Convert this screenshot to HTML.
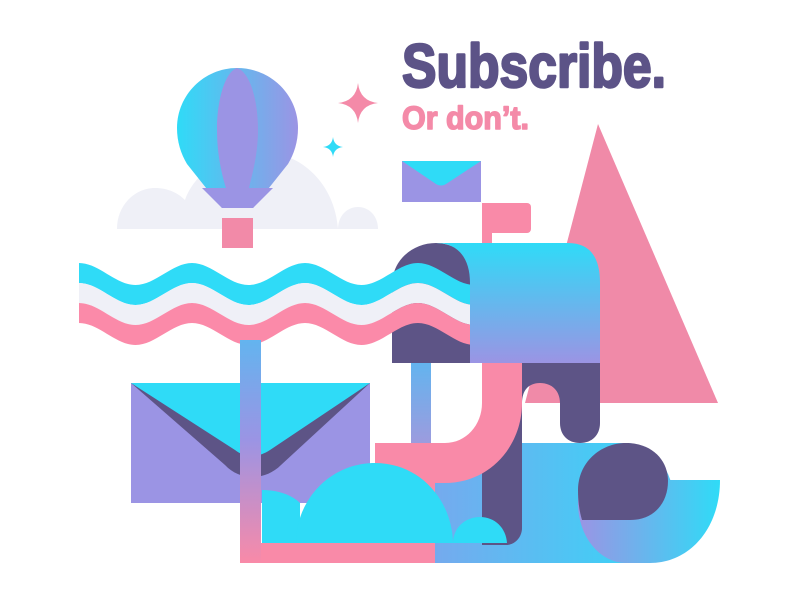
<!DOCTYPE html>
<html><head><meta charset="utf-8"><style>html,body{margin:0;padding:0;background:#fff;width:800px;height:600px;overflow:hidden}</style></head>
<body>
<svg width="800" height="600" viewBox="0 0 800 600" xmlns="http://www.w3.org/2000/svg">
<defs>
<linearGradient id="bal" x1="0" y1="0" x2="1" y2="0"><stop offset="0" stop-color="#2fdbf7"/><stop offset="1" stop-color="#9b94e4"/></linearGradient>
<linearGradient id="front" x1="0" y1="0" x2="0" y2="1"><stop offset="0" stop-color="#2fdbf7"/><stop offset="1" stop-color="#9b94e4"/></linearGradient>
<linearGradient id="pole" x1="0" y1="0" x2="0" y2="1"><stop offset="0" stop-color="#63b4ef"/><stop offset="0.45" stop-color="#9b94e4"/><stop offset="1" stop-color="#f98aa8"/></linearGradient>
<linearGradient id="pole2" x1="0" y1="0" x2="0" y2="1"><stop offset="0" stop-color="#63b4ef"/><stop offset="1" stop-color="#b98fd6"/></linearGradient>
<linearGradient id="bot" x1="0" y1="0" x2="1" y2="0"><stop offset="0" stop-color="#75aaee"/><stop offset="1" stop-color="#3fd0f6"/></linearGradient>
<linearGradient id="bot2" x1="578" y1="0" x2="720" y2="0" gradientUnits="userSpaceOnUse"><stop offset="0" stop-color="#9b94e4"/><stop offset="1" stop-color="#2fdbf7"/></linearGradient>
<path id="wave" d="M79,263 C99,263 115.5,285 135.5,285 C155.5,285 172,263 192,263 C212,263 228.5,285 248.5,285 C268.5,285 285,263 305,263 C325,263 341.5,285 361.5,285 C381.5,285 398,263 418,263 C438,263 454.5,285 474.5,285 C494.5,285 511,263 531,263 L531,283 C511,283 494.5,305 474.5,305 C454.5,305 438,283 418,283 C398,283 381.5,305 361.5,305 C341.5,305 325,283 305,283 C285,283 268.5,305 248.5,305 C228.5,305 212,283 192,283 C172,283 155.5,305 135.5,305 C115.5,305 99,283 79,283 Z"/>
</defs>
<g fill="#eff0f7">
<path d="M117,229 C117,205 135,188 155,188 C168,188 178,193 185,200 C195,172 225,152 262,152 C302,152 335,185 338,229 Z"/>
<path d="M338,229 C338,216 347,207 358,207 C369,207 378,216 378,229 Z"/>
</g>
<path d="M237,68 C271,68 298,95 298,128 C298,142 294,154 288,164 L253,208 L222,208 L187,164 C181,154 177,142 177,128 C177,95 204,68 237,68 Z" fill="url(#bal)"/>
<path d="M237,68 C250,72 258,100 258,130 C258,155 252,175 249,188 L226,188 C222,175 217,155 217,130 C217,100 225,72 237,68 Z" fill="#9b94e4"/>
<path d="M202,188 L273,188 L253,208 L222,208 Z" fill="#9b94e4"/>
<rect x="222" y="218" width="31" height="30" fill="#f28aa8"/>
<path d="M598,124 L718,403 L525,403 Z" fill="#f08aa8"/>
<rect x="482" y="203" width="10" height="45" fill="#f98aa8"/>
<rect x="482" y="203" width="49" height="30" rx="4" fill="#f98aa8"/>
<rect x="402" y="161" width="79" height="41" fill="#9b94e4"/>
<path d="M402,161 L481,161 L446,184 C443,186 439,186 436,184 Z" fill="#2fdbf7"/>
<path d="M358,83 Q360,101 378,103 Q360,105 358,123 Q356,105 338,103 Q356,101 358,83Z" fill="#f48aa8"/>
<path d="M333,137 Q334,146 343,147 Q334,148 333,157 Q332,148 323,147 Q332,146 333,137Z" fill="#2fdbf7"/>
<text x="402" y="87" font-family="Liberation Sans, sans-serif" font-weight="bold" font-size="61" fill="#5c5387" stroke="#5c5387" stroke-width="2.5" stroke-linejoin="round" textLength="264" lengthAdjust="spacingAndGlyphs">Subscribe.</text>
<text x="402" y="129" font-family="Liberation Sans, sans-serif" font-weight="bold" font-size="32" fill="#f48aa8" stroke="#f48aa8" stroke-width="1.5" stroke-linejoin="round" textLength="127" lengthAdjust="spacingAndGlyphs">Or don’t.</text>
<path d="M392,363 L392,285 C392,260 413,243 436,243 C458,243 476,260 476,283 L476,363 Z" fill="#5d5486"/>
<use href="#wave" fill="#2fdbf7"/>
<use href="#wave" fill="#eff0f7" transform="translate(0,20)"/>
<use href="#wave" fill="#fb8aa9" transform="translate(0,40)"/>
<path d="M436,243 L568,243 Q600,243 600,283 L600,363 L470,363 L470,283 C470,258 458,243 436,243 Z" fill="url(#front)"/>
<path d="M520,363 L600,363 L600,423 C600,435 592,443 580,443 C568,443 560,435 560,423 L560,403 C560,391 552,383 540,383 C528,383 522,391 522,403 Z" fill="#5d5486"/>
<rect x="131" y="383" width="239" height="120" fill="#9b94e4"/>
<path d="M131,383 L370,383 L281,465 C265,481 240,481 225,465 Z" fill="#5d5486"/>
<path d="M131,383 L370,383 L270,450 C258,458 245,458 235,450 Z" fill="#2fdbf7"/>
<rect x="375" y="443" width="61" height="120" fill="#f98aa8"/>
<rect x="240" y="543" width="196" height="20" fill="#f98aa8"/>
<rect x="240" y="340" width="21" height="223" fill="url(#pole)"/>
<rect x="411" y="363" width="20" height="120" fill="url(#pole2)"/>
<rect x="435" y="443" width="191" height="120" fill="url(#bot)"/>
<path d="M482,403 L522,403 L522,528 C522,537 515,545 506,545 L482,545 Z" fill="#5d5486"/>
<path d="M482,363 L522,363 L522,403 C522,446 490,483 445,483 L375,483 L375,443 L445,443 C466,443 482,425 482,403 Z" fill="#f98aa8"/>
<g fill="#2fdbf7">
<path d="M262,490 C278,490 292,495 300,503 L300,543 L262,543 Z"/>
<path d="M296,543 C296,500 330,463 375,463 C420,463 452,500 453,543 Z"/>
<path d="M453,543 C453,528 465,517 480,517 C495,517 506,528 507,543 Z"/>
</g>
<ellipse cx="626" cy="503" rx="48" ry="60" fill="url(#bot2)"/>
<path d="M626,480 L720,480 C720,528 690,563 650,563 L626,563 Z" fill="url(#bot2)"/>
<path d="M578,490 C578,463 600,443 626,443 C652,443 668,460 668,481 C668,502 655,520 630,520 L582,520 C579,510 578,500 578,490 Z" fill="#5d5486"/>
</svg>
</body></html>
